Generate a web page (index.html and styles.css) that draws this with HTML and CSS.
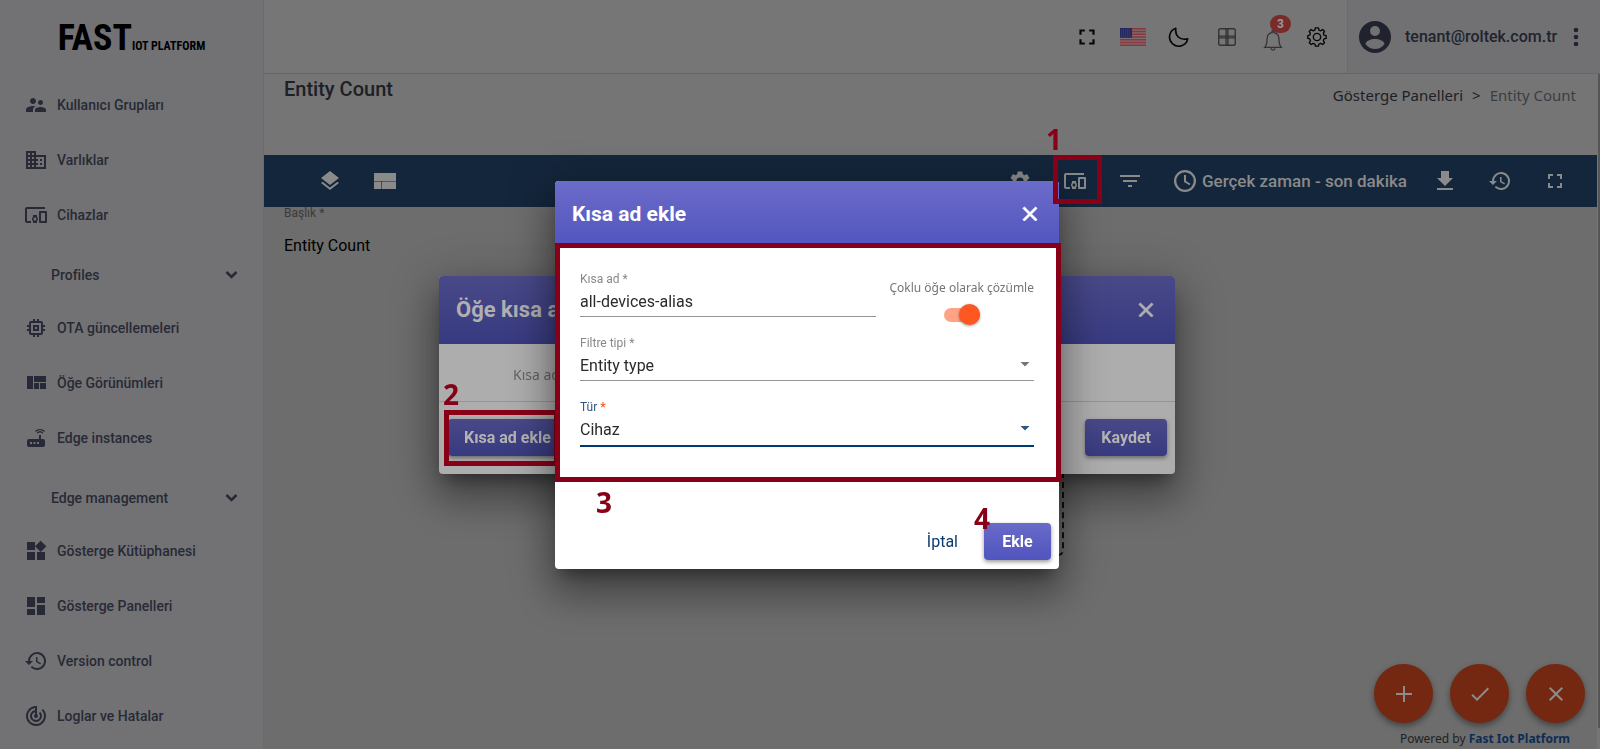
FILE: index.html
```html
<!DOCTYPE html>
<html lang="tr">
<head>
<meta charset="utf-8">
<meta name="viewport" content="width=device-width, initial-scale=1">
<title>Entity Count</title>
<link rel="stylesheet" href="styles.css">
</head>
<body>
<svg class="defs" aria-hidden="true">
  <symbol id="close" viewBox="0 0 24 24"><path d="M19 6.41 17.59 5 12 10.59 6.41 5 5 6.41 10.59 12 5 17.59 6.41 19 12 13.41 17.59 19 19 17.59 13.41 12z"/></symbol>
  <symbol id="devices" viewBox="0 0 24 24"><path d="M3 6h18V4H3c-1.1 0-2 .9-2 2v12c0 1.1.9 2 2 2h4v-2H3V6zm10 6H9v1.78c-.61.55-1 1.33-1 2.22s.39 1.67 1 2.22V20h4v-1.78c.61-.55 1-1.34 1-2.22s-.39-1.67-1-2.22V12zm-2 5.5c-.83 0-1.500-.67-1.500-1.500s.67-1.500 1.500-1.500 1.500.67 1.500 1.500-.67 1.500-1.500 1.500zM22 8h-6c-.5 0-1 .5-1 1v10c0 .5.5 1 1 1h6c.5 0 1-.5 1-1V9c0-.5-.5-1-1-1zm-1 10h-4v-8h4v8z"/></symbol>
  <symbol id="fullscreen" viewBox="0 0 24 24"><path d="M7 14H5v5h5v-2H7v-3zm-2-4h2V7h3V5H5v5zm12 7h-3v2h5v-5h-2v3zM14 5v2h3v3h2V5h-5z"/></symbol>
  <symbol id="history" viewBox="0 0 24 24"><path d="M13 3a9 9 0 0 0-9 9H1l3.890 3.890.07.14L9 12H6a7 7 0 1 1 2.060 4.940l-1.420 1.420A9 9 0 1 0 13 3zm-1 5v5l4.280 2.540.72-1.210-3.500-2.080V8H12z"/></symbol>
  <symbol id="chevron" viewBox="0 0 24 24"><path d="m4 8 8 8 8-8" fill="none" stroke="currentColor" stroke-width="4"/></symbol>
</svg>

<div class="app">
  <aside class="sidebar">
    <a class="logo" href="#"><span class="logo-main">FAST</span><span class="logo-sub">IOT PLATFORM</span></a>
    <nav class="menu">
      <a class="item" href="#"><svg viewBox="0 0 24 24"><path d="M16.500 12c1.380 0 2.490-1.120 2.490-2.500S17.880 7 16.500 7 14 8.120 14 9.500s1.120 2.500 2.500 2.500zM9 11c1.660 0 2.990-1.340 2.990-3S10.660 5 9 5 6 6.340 6 8s1.340 3 3 3zm7.500 3c-1.830 0-5.500.92-5.500 2.750V19h11v-2.250c0-1.830-3.670-2.750-5.500-2.750zM9 13c-2.330 0-7 1.170-7 3.500V19h7v-2.250c0-.85.33-2.340 2.370-3.470C10.500 13.100 9.660 13 9 13z"/></svg>Kullanıcı Grupları</a>
      <a class="item" href="#"><svg viewBox="0 0 24 24"><path d="M12 7V3H2v18h20V7H12zM6 19H4v-2h2v2zm0-4H4v-2h2v2zm0-4H4V9h2v2zm0-4H4V5h2v2zm4 12H8v-2h2v2zm0-4H8v-2h2v2zm0-4H8V9h2v2zm0-4H8V5h2v2zm10 12h-8v-2h2v-2h-2v-2h2v-2h-2V9h8v10zm-2-8h-2v2h2v-2zm0 4h-2v2h2v-2z"/></svg>Varlıklar</a>
      <a class="item" href="#"><svg><use href="#devices"/></svg>Cihazlar</a>
      <a class="item group" href="#">Profiles<svg class="chevron"><use href="#chevron"/></svg></a>
      <a class="item" href="#"><svg viewBox="0 0 24 24"><path d="M15 9H9v6h6V9zm-2 4h-2v-2h2v2zm8-2V9h-2V7a2 2 0 0 0-2-2h-2V3h-2v2h-2V3H9v2H7a2 2 0 0 0-2 2v2H3v2h2v2H3v2h2v2c0 1.100.9 2 2 2h2v2h2v-2h2v2h2v-2h2a2 2 0 0 0 2-2v-2h2v-2h-2v-2h2zm-4 6H7V7h10v10z"/></svg>OTA güncellemeleri</a>
      <a class="item" href="#"><svg viewBox="0 0 24 24"><path d="M10 18h5v-6h-5v6zm-7 0h6V5H3v13zm13 0h6v-6h-6v6zM10 5v6h12V5H10z"/></svg>Öğe Görünümleri</a>
      <a class="item" href="#"><svg viewBox="0 0 24 24"><path d="m20.200 5.900.8-.8C19.600 3.700 17.800 3 16 3s-3.600.7-5 2.100l.8.8C13 4.800 14.500 4.200 16 4.200s3 .6 4.200 1.700zm-.9.800c-.9-.9-2.100-1.400-3.300-1.400s-2.400.5-3.300 1.400l.8.8c.7-.7 1.600-1 2.500-1s1.800.3 2.500 1l.8-.8zM19 13h-2V9h-2v4H5a2 2 0 0 0-2 2v4c0 1.100.9 2 2 2h14a2 2 0 0 0 2-2v-4a2 2 0 0 0-2-2zM8 18H6v-2h2v2zm3.500 0h-2v-2h2v2zm3.500 0h-2v-2h2v2z"/></svg>Edge instances</a>
      <a class="item group" href="#">Edge management<svg class="chevron"><use href="#chevron"/></svg></a>
      <a class="item" href="#"><svg viewBox="0 0 24 24"><path d="M13 13v8h8v-8h-8zM3 21h8v-8H3v8zM3 3v8h8V3H3zm13.660-1.310L11 7.340 16.660 13l5.660-5.660-5.660-5.650z"/></svg>Gösterge Kütüphanesi</a>
      <a class="item" href="#"><svg viewBox="0 0 24 24"><path d="M3 13h8V3H3v10zm0 8h8v-6H3v6zm10 0h8V11h-8v10zm0-18v6h8V3h-8z"/></svg>Gösterge Panelleri</a>
      <a class="item" href="#"><svg><use href="#history"/></svg>Version control</a>
      <a class="item" href="#"><svg viewBox="0 0 24 24"><path d="m19.070 4.930-1.410 1.410A8 8 0 1 1 11 4.070v2.020a6 6 0 1 0 5.240 1.670l-1.410 1.410A4 4 0 1 1 11 8.140v2.140A2 2 0 1 0 14 12c0-.74-.4-1.380-1-1.720V2h-1a10 10 0 1 0 7.070 2.930z"/></svg>Loglar ve Hatalar</a>
    </nav>
  </aside>

  <div class="main">
    <header class="topbar">
      <div class="actions">
        <button class="bare" aria-label="Tam ekran"><svg><use href="#fullscreen"/></svg></button>
        <button class="bare" aria-label="Dil"><svg class="flag" viewBox="0 0 26 18"><path fill="#776f72" d="M0 0h26v18H0z"/><path stroke="#8a363e" stroke-width="1.400" d="M0 .7h26M0 3.500h26M0 6.200h26M0 9h26M0 11.800h26M0 14.500h26M0 17.300h26"/><path fill="#25285c" d="M0 0h12v9.700H0z"/><path stroke="#44466e" stroke-dasharray="1 1" d="M1 2h10M1 4h10M1 6h10M1 8h10"/></svg></button>
        <button class="bare" aria-label="Koyu tema"><svg viewBox="0 0 24 24"><path d="M8.500 2.500c-1 8 4 13.500 13 11.500A10 10 0 1 1 8.500 2.500z" fill="none" stroke="currentColor" stroke-width="1.800" stroke-linejoin="round"/></svg></button>
        <button class="bare thin" aria-label="Uygulamalar"><svg viewBox="0 0 24 24"><g fill="none" stroke="currentColor" stroke-width="1.500"><rect x="3" y="3" width="18" height="18" rx="2"/><path d="M11 3v18M13 3v18M3 11h18M3 13h18"/></g></svg></button>
        <button class="bare thin bell" aria-label="Bildirimler"><svg viewBox="0 0 24 24"><path d="M3 20h18c-2-2-2.500-4-2.500-9 0-4-2.500-6.500-5.500-7V2h-2v2c-3 .5-5.500 3-5.500 7 0 5-.5 7-2.500 9zm7 1a2 2 0 0 0 4 0" fill="none" stroke="currentColor" stroke-width="1.400"/></svg><span class="badge">3</span></button>
        <button class="bare" aria-label="Ayarlar"><svg viewBox="0 0 24 24"><g fill="none" stroke="currentColor" stroke-width="1.500" stroke-linejoin="round"><circle cx="12" cy="12" r="4"/><path d="m10.200 2-.6 2.400-2 .8-2.100-1.300-2 2 1.300 2.100-.8 2L2 10.500v3l2.100.6.8 2-1.300 2.100 2 2 2.100-1.300 2 .8.600 2.300h3.200l.6-2.300 2-.8 2.100 1.300 2-2-1.300-2.100.8-2 2.300-.6v-3l-2.300-.5-.8-2 1.300-2.100-2-2-2.100 1.300-2-.8L13.500 2z"/></g></svg></button>
      </div>
      <div class="profile">
        <svg class="avatar" viewBox="0 0 32 32"><circle cx="16" cy="16" r="16"/><circle cx="16" cy="10" r="5" class="cut"/><path class="cut" d="M16 18c-4 0-9.500 2-9.500 5 2.500 3.500 5.500 5 9.500 5s7-1.500 9.500-5c0-3-5.500-5-9.500-5z"/></svg>
        <span>tenant@roltek.com.tr</span>
        <button class="bare more" aria-label="Menü"><svg viewBox="0 0 24 24"><circle cx="12" cy="5" r="2.300"/><circle cx="12" cy="12" r="2.300"/><circle cx="12" cy="19" r="2.300"/></svg></button>
      </div>
    </header>
    <div class="page">
      <div class="content">
        <div class="heading">
          <h1>Entity Count</h1>
          <nav class="crumbs"><a href="#">Gösterge Panelleri</a><span>&gt;</span><span class="current">Entity Count</span></nav>
        </div>
        <div class="toolbar">
          <div class="tools left">
            <button class="bare" aria-label="Katmanlar"><svg viewBox="0 0 24 24"><path d="m11.990 18.540-7.370-5.730L3 14.070l9 7 9-7-1.630-1.270-7.380 5.740zM12 16l7.360-5.730L21 9l-9-7-9 7 1.630 1.270L12 16z"/></svg></button>
            <button class="bare" aria-label="Düzen"><svg viewBox="0 0 24 24"><path d="M1 4h22v8H1zM1 12.600h7V20H1zM8.600 12.600H23V20H8.600z"/></svg></button>
          </div>
          <div class="tools">
            <button class="bare" aria-label="Ayarlar"><svg viewBox="0 0 24 24"><path d="M19.140 12.940c.04-.3.06-.61.06-.94s-.02-.64-.07-.94l2.030-1.580a.49.49 0 0 0 .12-.61l-1.920-3.320a.49.49 0 0 0-.59-.22l-2.390.96a7 7 0 0 0-1.620-.94l-.36-2.540a.48.48 0 0 0-.48-.41h-3.840a.47.47 0 0 0-.47.41l-.36 2.540c-.59.24-1.130.57-1.620.94l-2.390-.96a.48.48 0 0 0-.59.22L2.740 8.870a.47.47 0 0 0 .12.61l2.030 1.580a7 7 0 0 0-.02 1.880l-2.030 1.580a.49.49 0 0 0-.12.61l1.920 3.320c.12.220.37.290.59.220l2.390-.96c.5.38 1.030.7 1.620.94l.36 2.540c.05.240.24.410.48.410h3.840c.24 0 .44-.17.47-.41l.36-2.540c.59-.24 1.130-.56 1.620-.94l2.390.96c.22.080.47 0 .59-.22l1.920-3.320a.47.47 0 0 0-.12-.61l-2.010-1.580zM12 15.600A3.600 3.600 0 1 1 12 8.400a3.600 3.600 0 0 1 0 7.200z"/></svg></button>
            <button class="bare" aria-label="Öğe kısa adları"><svg><use href="#devices"/></svg></button>
            <button class="bare" aria-label="Filtreler"><svg viewBox="0 0 24 24"><path d="M10 18h4v-2h-4v2zM2 6v2h20V6H2zm3 7h14v-2H5v2z"/></svg></button>
            <button class="bare time"><svg viewBox="0 0 24 24"><path d="M12 1a11 11 0 1 0 0 22 11 11 0 0 0 0-22zm0 19.700a8.700 8.700 0 1 1 0-17.400 8.700 8.700 0 0 1 0 17.400zM13 6h-2v7l5.500 3.300 1-1.600L13 12V6z"/></svg>Gerçek zaman - son dakika</button>
            <button class="bare" aria-label="Dışa aktar"><svg viewBox="0 0 24 24"><path d="M20 9h-4V2H8v7H4l8 8 8-8zM4 19v2h16v-2H4z"/></svg></button>
            <button class="bare" aria-label="Sürümler"><svg><use href="#history"/></svg></button>
            <button class="bare" aria-label="Tam ekran"><svg><use href="#fullscreen"/></svg></button>
          </div>
        </div>
        <div class="canvas">
          <label for="title">Başlık *</label>
          <input id="title" value="Entity Count">
          <div class="dropzone"></div>
          <div class="fabs">
            <button aria-label="Ekle"><svg viewBox="0 0 24 24"><path d="M20 13h-7v7h-2v-7H4v-2h7V4h2v7h7v2z"/></svg></button>
            <button aria-label="Uygula"><svg viewBox="0 0 24 24"><path d="M9 16.170 4.830 12l-1.420 1.410L9 19 21 7l-1.410-1.410z"/></svg></button>
            <button aria-label="Kapat"><svg><use href="#close"/></svg></button>
          </div>
          <p class="powered">Powered by <a href="#">Fast Iot Platform</a></p>
        </div>
      </div>
    </div>
  </div>
</div>

<div class="overlay">
  <section class="dialog back">
    <header><h2>Öğe kısa adları</h2><button class="bare" aria-label="Kapat"><svg><use href="#close"/></svg></button></header>
    <div class="alias-head">Kısa ad</div>
    <footer><button class="btn">Kısa ad ekle</button><button class="btn">Kaydet</button></footer>
  </section>
</div>

<div class="mark box two"></div>

<div class="overlay">
  <section class="dialog front" role="dialog" aria-label="Kısa ad ekle">
    <header><h2>Kısa ad ekle</h2><button class="bare" aria-label="Kapat"><svg><use href="#close"/></svg></button></header>
    <form class="form">
      <div class="row">
        <div class="field"><label for="alias">Kısa ad *</label><input id="alias" value="all-devices-alias"></div>
        <label class="multi">Çoklu öğe olarak çözümle<input type="checkbox" role="switch" checked></label>
      </div>
      <div class="field drop"><label for="filter">Filtre tipi *</label><select id="filter"><option>Entity type</option></select></div>
      <div class="field drop active"><label for="type">Tür <b>*</b></label><select id="type"><option>Cihaz</option></select></div>
    </form>
    <footer><button class="cancel">İptal</button><button class="btn">Ekle</button></footer>
  </section>
</div>

<div class="mark box one"></div>
<div class="mark box three"></div>
<span class="mark num n1">1</span>
<span class="mark num n2">2</span>
<span class="mark num n3">3</span>
<span class="mark num n4">4</span>
</body>
</html>
```
FILE: styles.css
```css
* { box-sizing: border-box; }
body { margin: 0; font-family: Roboto, "Noto Sans", sans-serif; font-size: 16px; background: #757575; overflow: hidden; }
a { color: inherit; text-decoration: none; }
h1, h2, p { margin: 0; }
button, input, select { font: inherit; color: inherit; }
svg { width: 24px; height: 24px; fill: currentColor; flex: none; display: block; }
.defs { position: absolute; width: 0; height: 0; }
.bare { border: 0; background: none; padding: 0; display: flex; align-items: center; }

.app { display: flex; height: 100vh; min-height: 600px; }
.sidebar { width: 264px; flex: none; background: #727274; color: #272a36; border-right: 1px solid #6b6b6c; overflow: hidden; }
.logo { display: flex; align-items: baseline; justify-content: center; height: 77px; padding-top: 14px; color: #000; font-family: "Roboto Condensed", "Liberation Sans Narrow", "DejaVu Sans Condensed", sans-serif; font-weight: 700; line-height: 48px; }
.logo-main { font-size: 36px; }
.logo-sub { font-size: 12px; }
.item { display: flex; align-items: center; gap: 9px; height: 55px; padding: 0 24px; font-size: 14px; font-weight: 500; }
.group { height: 58px; padding: 7px 24px 0 51px; justify-content: space-between; }
.chevron { width: 15px; height: 15px; }

.main { flex: 1; min-width: 0; display: flex; flex-direction: column; }
.topbar { display: flex; justify-content: flex-end; height: 74px; border-bottom: 1px solid #666; background: #767676; color: #070707; }
.actions { display: flex; align-items: center; padding-right: 7px; }
.actions button { width: 46px; justify-content: center; }
.actions svg { width: 22px; height: 22px; }
.actions .flag { width: 26px; height: 18px; }
.actions button:first-child svg { width: 26px; height: 26px; }
.actions .thin { color: #333; padding-left: 3px; }
.bell { position: relative; padding-top: 6px; }
.badge { position: absolute; left: 22px; top: -8px; width: 21px; height: 18px; border-radius: 9px; background: #792b2b; color: #999; font-size: 12px; font-weight: 700; line-height: 18px; text-align: center; }
.profile { display: flex; align-items: center; width: 253px; padding: 0 12px 0 11px; border-left: 1px solid #6a6a6b; background: #717173; color: #20232e; font-weight: 500; }
.avatar { width: 32px; height: 32px; margin-right: 14px; }
.cut { fill: #717173; }
.more { margin-left: auto; }

.page { flex: 1; min-height: 0; display: flex; padding-right: 3px; background: linear-gradient(#555, #555) right top / 2px 654px no-repeat; }
.content { flex: 1; display: flex; flex-direction: column; }
.heading { display: flex; justify-content: space-between; height: 81px; padding: 2px 21px 0 20px; color: #1d2026; }
h1 { font-size: 20px; font-weight: 500; line-height: 26px; }
.crumbs { display: flex; gap: 9px; padding-top: 7px; font-family: "Noto Sans", sans-serif; font-size: 15px; line-height: 24px; }
.current { color: #3a3e44; }
.toolbar { display: flex; justify-content: space-between; align-items: center; height: 52px; padding: 0 30px 0 54px; background: #14263c; color: #8a8a8a; }
.tools { display: flex; gap: 31px; }
.time { gap: 5px; margin-right: -5px; font-size: 17px; font-weight: 500; }
.canvas { position: relative; flex: 1; display: flex; flex-direction: column; padding: 0 12px 0 20px; background: #6d6d6d; }
.canvas label { color: #3b3b3b; font-size: 12px; line-height: 12px; }
.canvas input { width: 400px; height: 28px; margin-top: 12px; padding: 0; border: 0; background: none; color: #000; }
.dropzone { position: absolute; left: 40%; top: 190px; width: 267px; height: 159px; border: 2px dashed #111; border-radius: 6px; }
.fabs { display: flex; justify-content: flex-end; gap: 17px; margin-top: auto; }
.fabs button { display: grid; place-items: center; width: 59px; height: 59px; padding: 0; border: 0; border-radius: 50%; background: #742711; color: #8c8c8c; box-shadow: 0 3px 6px #0006; }
.powered { align-self: flex-end; padding: 6px 15px 0 0; font-family: "Noto Sans", sans-serif; font-size: 12px; line-height: 20px; color: #222; }
.powered a { color: #0d2c55; font-weight: 700; }

.overlay { position: fixed; inset: 0; display: grid; place-items: center; padding-left: 14px; pointer-events: none; }
.dialog { border-radius: 4px; box-shadow: 0 11px 15px -7px #0006, 0 24px 38px 3px #0004, 0 9px 46px 8px #0003; pointer-events: auto; overflow: hidden; }
.dialog header { display: flex; align-items: center; justify-content: space-between; height: 66px; padding: 0 17px; color: #fff; background: linear-gradient(#6b6bc9, #5155be); }
.dialog header svg { stroke: currentColor; }
h2 { font-size: 21px; font-weight: 700; }
.dialog footer { display: flex; align-items: center; padding: 0 8px; }
.btn { height: 37px; padding: 0 16px; border: 0; border-radius: 4px; font-weight: 700; color: #fff; background: linear-gradient(#696bc9, #5054bd); box-shadow: 0 2px 4px #0006; }
.back { width: 736px; background: #adadad; }
.back header { height: 68px; color: #b0b0b0; background: linear-gradient(#494989, #373a80); }
.back h2 { font-size: 22px; }
.back .btn { color: #b4b4b4; background: linear-gradient(#494989, #373a80); }
.alias-head { height: 58px; padding-left: 74px; border-bottom: 1px solid #939393; color: #636363; font-family: "Noto Sans", sans-serif; font-size: 14px; line-height: 62px; }
.back footer { justify-content: space-between; height: 72px; padding-left: 9px; }
.front { width: 504px; background: #fff; }
.form { display: flex; flex-direction: column; gap: 18px; padding: 24px 25px 49px; }
.row { display: flex; gap: 13px; height: 46px; }
.row .field { flex: 1; }
.field { display: flex; flex-direction: column; height: 46px; border-bottom: 1px solid #949494; color: #2b2b2b; }
.field label { font-size: 12px; line-height: 17px; color: #888; }
.field input, .field select { width: 100%; height: 28px; padding: 0; border: 0; outline: 0; background: none; appearance: none; }
.drop { position: relative; }
.drop::after { content: ""; position: absolute; right: 4px; top: 27px; width: 10px; height: 5px; background: #757575; clip-path: polygon(0 0, 100% 0, 50% 100%); pointer-events: none; }
.field.active { height: 48px; border-bottom: 2px solid #003a75; }
.active label { color: #305680; }
.active b { color: #ff5722; }
.active::after { background: #305680; }
.multi { display: flex; flex-direction: column; align-items: center; gap: 12px; padding-top: 8px; font-family: "Noto Sans", sans-serif; font-size: 12px; line-height: 17px; color: #757575; }
.multi input { appearance: none; width: 36px; height: 14px; margin: 0; border-radius: 7px; background: #ffa387; display: flex; align-items: center; justify-content: flex-end; }
.multi input::before { content: ""; flex: none; width: 21px; height: 21px; border-radius: 50%; background: #ff5722; box-shadow: 0 1px 3px #0006; }
.front footer { justify-content: flex-end; height: 73px; padding-top: 19px; gap: 10px; }
.front .btn { width: 67px; }
.cancel { height: 37px; padding: 0 16px; border: 0; background: none; color: #0b3b6f; }

.mark { position: absolute; color: #880018; pointer-events: none; }
.box { border: 5px solid #880018; }
.one { left: 1053px; top: 155px; width: 49px; height: 49px; }
.two { left: 444px; top: 410px; width: 115px; height: 56px; }
.three { left: 555px; top: 243px; width: 506px; height: 239px; }
.num { font-family: "Noto Sans", sans-serif; font-size: 28px; font-weight: 700; line-height: 28px; }
.n1 { left: 1046px; top: 125px; }
.n2 { left: 443px; top: 380px; }
.n3 { left: 596px; top: 488px; }
.n4 { left: 974px; top: 504px; }
```
